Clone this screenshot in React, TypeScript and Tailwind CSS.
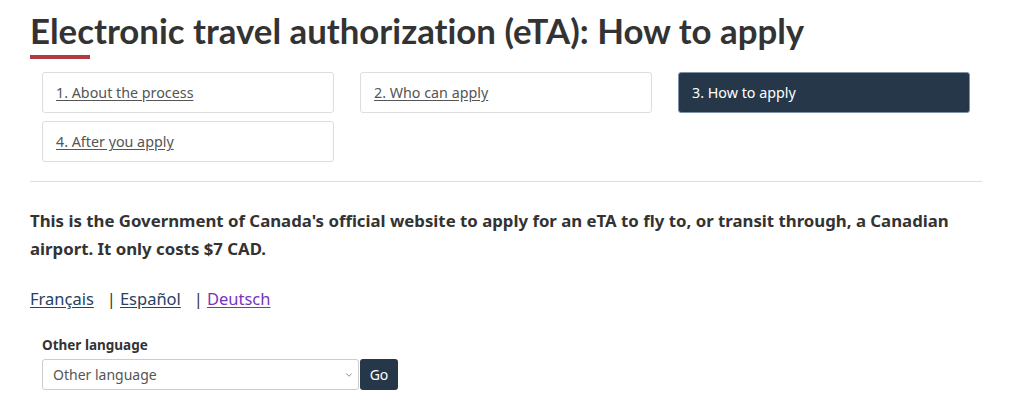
import { ChevronDown } from 'lucide-react';

const steps = [
    { label: '1. About the process', active: false },
    { label: '2. Who can apply', active: false },
    { label: '3. How to apply', active: true },
    { label: '4. After you apply', active: false },
];

const App = () => {
    return (
        <div className="bg-white min-h-[413px] pl-[30px] pr-[42px] pt-[11px] text-[#333]" style={{ fontFamily: '"Noto Sans", sans-serif' }}>
            <h1 className="text-[34.8px] leading-[40px] font-bold text-[#333] [font-variant-ligatures:none]" style={{ fontFamily: 'Lato, sans-serif' }}>
                Electronic travel authorization (eTA): How to apply
            </h1>
            <div className="w-[60px] h-[4px] bg-[#af3c43] mt-[4px]" />

            <ul className="grid grid-cols-3 gap-x-[26px] gap-y-[8px] pl-[12px] pr-[12px] mt-[13px]">
                {steps.map((step) => (
                    <li key={step.label}>
                        <a
                            href="#"
                            className={`flex items-center h-[41px] px-[13px] rounded-[3px] text-[14.3px] ${step.active
                                ? 'bg-[#26374a] border border-[#7e92a8] text-white'
                                : 'bg-white border border-[#ddd] text-[#555] underline underline-offset-2'
                                }`}
                        >
                            {step.label}
                        </a>
                    </li>
                ))}
            </ul>

            <hr className="border-t border-[#ddd] mt-[19px]" />

            <p className="mt-[25px] text-[16.8px] leading-[28px] font-bold text-[#333] pr-[20px]">
                This is the Government of Canada's official website to apply for an eTA to fly to, or transit through, a Canadian airport. It only costs $7 CAD.
            </p>

            <div className="mt-[24px] flex items-center text-[16.5px] leading-[24px]">
                <a href="#" className="text-[#284162] underline underline-offset-2">Français</a>
                <span className="ml-[13px] mr-[4px]">|</span>
                <a href="#" className="text-[#284162] underline underline-offset-2">Español</a>
                <span className="ml-[13px] mr-[4px]">|</span>
                <a href="#" className="text-[#7834bc] underline underline-offset-2">Deutsch</a>
            </div>

            <div className="ml-[12px] mt-[25px]">
                <label className="block text-[13.5px] leading-[18px] font-bold text-[#333]">Other language</label>
                <div className="flex items-center mt-[5px]">
                    <div className="relative w-[317px] h-[31px] border border-[#ccc] rounded-[3px] flex items-center pl-[10px] text-[14px] text-[#555]">
                        Other language
                        <ChevronDown className="absolute right-[4px] top-1/2 -translate-y-1/2 w-[10px] h-[10px] text-[#777]" strokeWidth={2} />
                    </div>
                    <button className="ml-[1px] w-[38px] h-[31px] bg-[#26374a] text-white text-[14px] rounded-[3px]">Go</button>
                </div>
            </div>
        </div>
    );
};

export default App;
